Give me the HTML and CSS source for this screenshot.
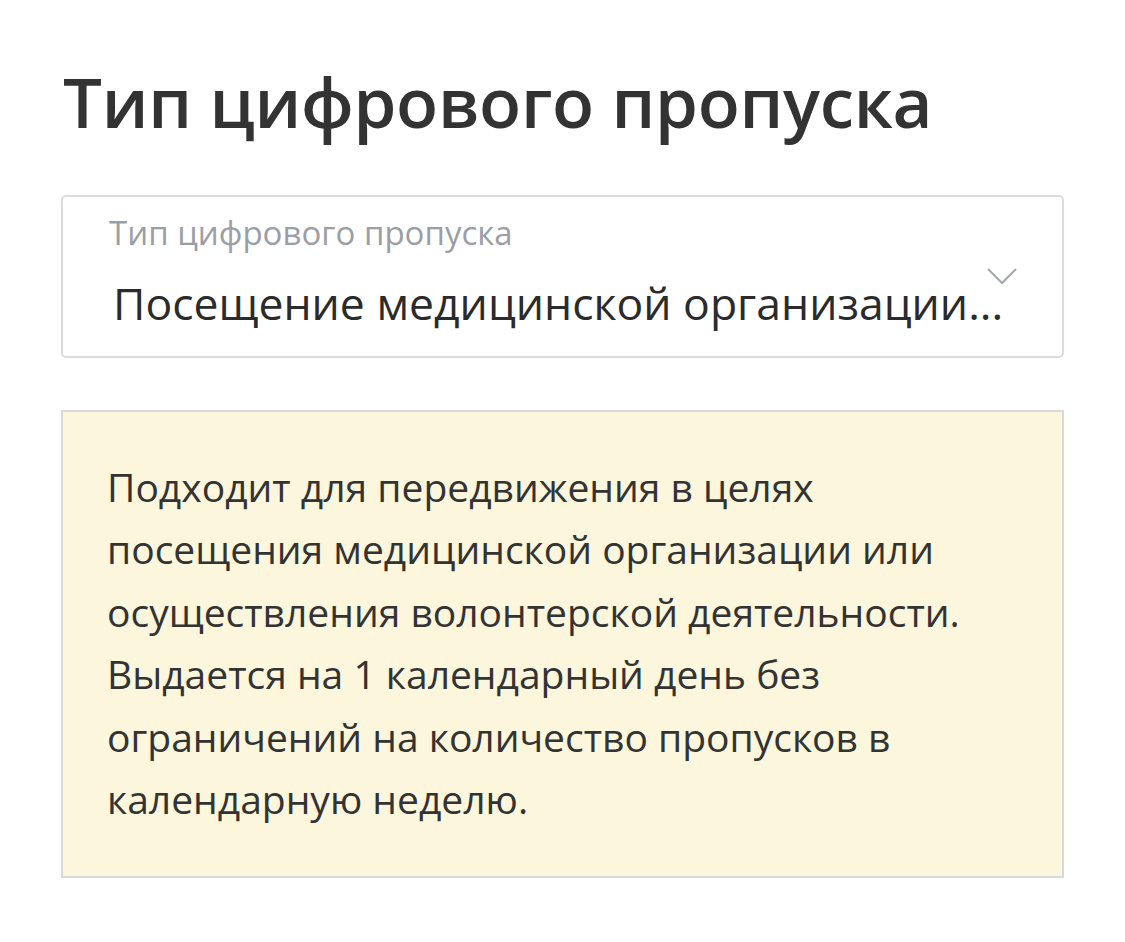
FILE: index.html
```html
<!DOCTYPE html>
<html lang="ru">
<head>
    <meta charset="UTF-8">
    <title>Тип цифрового пропуска</title>
    <link rel="stylesheet" href="styles.css">
</head>
<body>
    <h1 class="title">Тип цифрового пропуска</h1>

    <div class="select">
        <div class="select-label">Тип цифрового пропуска</div>
        <div class="select-value">Посещение медицинской организации...</div>
        <svg class="select-arrow" width="32" height="18" viewBox="0 0 32 18">
            <path d="M2 2 L16 16 L30 2" fill="none" stroke="#a3a6ae" stroke-width="2"/>
        </svg>
    </div>

    <div class="note">
        <p>Подходит для передвижения в целях посещения медицинской организации или осуществления волонтерской деятельности. Выдается на 1 календарный день без ограничений на количество пропусков в календарную неделю.</p>
    </div>
</body>
</html>
```

FILE: styles.css
```css
* {
    box-sizing: border-box;
}

body {
    margin: 0;
    padding: 56px 61px 40px 61px;
    font-family: 'Open Sans', 'Noto Sans', sans-serif;
    color: #333;
    background: #fff;
}

.title {
    margin: 0 0 49px 2px;
    font-size: 69px;
    font-weight: 600;
    line-height: 90px;
    letter-spacing: -0.3px;
    color: #333;
}

.select {
    position: relative;
    border: 2px solid #d9dce1;
    border-radius: 5px;
    padding: 16px 40px 0 45px;
    height: 163px;
}

.select-label {
    font-size: 33px;
    line-height: 40px;
    color: #9b9ea6;
    margin-left: 1px;
}

.select-value {
    margin-top: 18px;
    font-size: 44.5px;
    line-height: 64px;
    margin-left: 5px;
    color: #2b2b2b;
    white-space: nowrap;
}

.select-arrow {
    position: absolute;
    right: 44px;
    top: 70px;
}

.note {
    margin-top: 52px;
    background: #fbf6dc;
    border: 2px solid #d6d9de;
    padding: 44px 44px 0 44px;
    height: 468px;
}

.note p {
    margin: 0;
    font-size: 39px;
    font-weight: 500;
    line-height: 62.4px;
    max-width: 880px;
}
```
